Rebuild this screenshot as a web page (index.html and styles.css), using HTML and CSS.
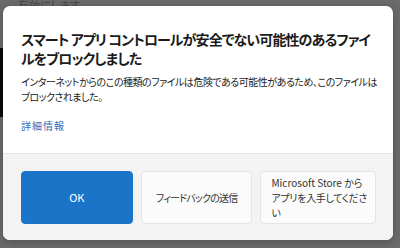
FILE: index.html
```html
<!DOCTYPE html>
<html lang="ja">
<head>
<meta charset="utf-8">
<link rel="stylesheet" href="styles.css">
</head>
<body>
<div class="page">
  <div class="behind-top">有効にします</div>
  <div class="behind-block"></div>
  <div class="behind-rest"></div>
</div>
<div class="dialog" role="dialog">
  <div class="content">
    <h1 class="title">スマート アプリ コントロールが安全でない可能性のあるファイ<br>ルをブロックしました</h1>
    <p class="body">インターネットからのこの種類のファイルは危険である可能性があるため、このファイルは<br>ブロックされました。</p>
    <a class="link" href="#">詳細情報</a>
  </div>
  <div class="footer">
    <div class="btn primary" role="button">OK</div>
    <div class="btn tight" role="button">フィードバックの送信</div>
    <div class="btn left" role="button">
      <span class="ln">Microsoft Store から</span>
      <span class="ln jp">アプリを入手してくださ</span>
      <span class="ln jp">い</span>
    </div>
  </div>
</div>
</body>
</html>
```
FILE: styles.css
```css
html, body {
  margin: 0;
  padding: 0;
}
body {
  width: 400px;
  height: 248px;
  overflow: hidden;
  background: #6b6b6b;
  font-family: "Noto Sans CJK JP", "Noto Sans", sans-serif;
  font-feature-settings: "palt";
  position: relative;
}
.page {
  display: flex;
  flex-direction: column;
  height: 100%;
}
.behind-top {
  height: 48px;
  padding-left: 18px;
  font-size: 11px;
  line-height: 10px;
  color: #474747;
}
.behind-block {
  height: 69px;
  width: 3px;
  background: #0a0a0a;
}
.behind-rest {
  flex: 1;
}
.dialog {
  position: absolute;
  left: 3px;
  top: 6px;
  width: 390px;
  height: 234px;
  background: #ffffff;
  border-radius: 7px;
  overflow: hidden;
  display: flex;
  flex-direction: column;
  box-shadow: 0 2px 8px rgba(0,0,0,0.25);
}
.content {
  height: 147px;
  flex: none;
  box-sizing: border-box;
  padding: 24px 18px 0 18px;
  display: flex;
  flex-direction: column;
  align-items: flex-start;
}
.title {
  margin: 0;
  font-size: 14px;
  line-height: 18.5px;
  letter-spacing: -0.9px;
  font-weight: 700;
  color: #1b1b1b;
  white-space: nowrap;
}
.body {
  margin: 6.5px 0 0 0;
  font-size: 10px;
  line-height: 15px;
  letter-spacing: -0.48px;
  color: #222222;
  white-space: nowrap;
}
.link {
  margin-top: 14px;
  font-size: 10px;
  line-height: 15px;
  color: #2e6fbe;
  text-decoration: none;
  letter-spacing: 1px;
}
.footer {
  flex: 1;
  min-height: 0;
  background: #f3f3f3;
  border-top: 1px solid #e6e6e6;
  padding: 17px 17px 16px 18px;
  display: grid;
  grid-template-columns: 1fr 1fr 1fr;
  grid-template-rows: 1fr;
  gap: 8px;
}
.btn {
  box-sizing: border-box;
  font-size: 10px;
  line-height: 15px;
  color: #333333;
  background: #fbfbfb;
  border: 1px solid #e4e4e4;
  border-radius: 4px;
  padding: 0 8px;
  white-space: nowrap;
  display: flex;
  flex-direction: column;
  justify-content: center;
  align-items: center;
}
.btn.tight {
  letter-spacing: -0.8px;
}
.btn.primary {
  background: #1c74c8;
  border-color: #1c74c8;
  color: #ffffff;
  font-size: 11px;
}
.btn.left {
  align-items: flex-start;
  padding-left: 10px;
}
.ln {
  display: block;
}
.ln.jp {
  letter-spacing: -0.3px;
}
```
